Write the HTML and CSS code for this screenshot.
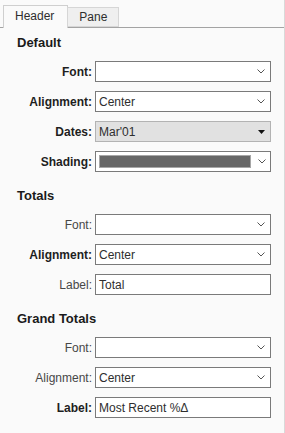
FILE: index.html
```html
<!DOCTYPE html>
<html lang="en">
<head>
    <meta charset="UTF-8">
    <title>Format Header</title>
    <link rel="stylesheet" href="styles.css">
</head>
<body>
    <div class="panel">
        <div class="tab-bar">
            <div class="tab active">Header</div>
            <div class="tab">Pane</div>
        </div>

        <div class="section">
            <h2 class="section-title">Default</h2>
            <div class="row">
                <label class="row-label bold">Font:</label>
                <div class="select"><span class="select-text"></span><svg class="chevron" width="8" height="5" viewBox="0 0 8 5"><path d="M0.5 0.5 L4 4 L7.5 0.5" fill="none" stroke="#555" stroke-width="1"/></svg></div>
            </div>
            <div class="row">
                <label class="row-label bold">Alignment:</label>
                <div class="select"><span class="select-text">Center</span><svg class="chevron" width="8" height="5" viewBox="0 0 8 5"><path d="M0.5 0.5 L4 4 L7.5 0.5" fill="none" stroke="#555" stroke-width="1"/></svg></div>
            </div>
            <div class="row">
                <label class="row-label bold">Dates:</label>
                <div class="select disabled"><span class="select-text">Mar'01</span><svg class="caret" width="7" height="4" viewBox="0 0 7 4"><path d="M0 0 H7 L3.5 4 Z" fill="#111"/></svg></div>
            </div>
            <div class="row">
                <label class="row-label bold">Shading:</label>
                <div class="select shading"><span class="swatch"></span><svg class="chevron" width="8" height="5" viewBox="0 0 8 5"><path d="M0.5 0.5 L4 4 L7.5 0.5" fill="none" stroke="#555" stroke-width="1"/></svg></div>
            </div>
        </div>

        <div class="section">
            <h2 class="section-title">Totals</h2>
            <div class="row">
                <label class="row-label">Font:</label>
                <div class="select"><span class="select-text"></span><svg class="chevron" width="8" height="5" viewBox="0 0 8 5"><path d="M0.5 0.5 L4 4 L7.5 0.5" fill="none" stroke="#555" stroke-width="1"/></svg></div>
            </div>
            <div class="row">
                <label class="row-label bold">Alignment:</label>
                <div class="select"><span class="select-text">Center</span><svg class="chevron" width="8" height="5" viewBox="0 0 8 5"><path d="M0.5 0.5 L4 4 L7.5 0.5" fill="none" stroke="#555" stroke-width="1"/></svg></div>
            </div>
            <div class="row">
                <label class="row-label">Label:</label>
                <div class="text-input">Total</div>
            </div>
        </div>

        <div class="section">
            <h2 class="section-title">Grand Totals</h2>
            <div class="row">
                <label class="row-label">Font:</label>
                <div class="select"><span class="select-text"></span><svg class="chevron" width="8" height="5" viewBox="0 0 8 5"><path d="M0.5 0.5 L4 4 L7.5 0.5" fill="none" stroke="#555" stroke-width="1"/></svg></div>
            </div>
            <div class="row">
                <label class="row-label">Alignment:</label>
                <div class="select"><span class="select-text">Center</span><svg class="chevron" width="8" height="5" viewBox="0 0 8 5"><path d="M0.5 0.5 L4 4 L7.5 0.5" fill="none" stroke="#555" stroke-width="1"/></svg></div>
            </div>
            <div class="row">
                <label class="row-label bold">Label:</label>
                <div class="text-input">Most Recent %Δ</div>
            </div>
        </div>
    </div>
</body>
</html>
```

FILE: styles.css
```css
* {
    box-sizing: border-box;
}

body {
    margin: 0;
    font-family: 'Liberation Sans', Arial, sans-serif;
    font-size: 12px;
    color: #333;
    background-color: #fafafa;
}

.panel {
    width: 285px;
    height: 433px;
    border-right: 1px solid #d9d9d9;
    background-color: #fafafa;
}

.tab-bar {
    display: flex;
    align-items: flex-end;
    height: 28px;
    padding-left: 3px;
    border-bottom: 1px solid #a3a3a3;
}

.tab {
    height: 20px;
    padding: 0 11px 0 11px;
    margin-left: -1px;
    border: 1px solid #d6d6d6;
    background-color: #efefef;
    line-height: 18px;
    color: #2e2e2e;
}

.tab.active {
    height: 23px;
    margin-left: 0;
    margin-bottom: -1px;
    padding: 0 13px 0 11px;
    border-color: #cfcfcf;
    border-bottom: none;
    background-color: #fafafa;
    line-height: 21px;
}

.section {
    padding-top: 7px;
    padding-bottom: 9px;
}

.section-title {
    margin: 0 0 10px 17px;
    font-size: 13px;
    line-height: 16px;
    font-weight: 700;
    color: #1a1a1a;
}

.row {
    display: grid;
    grid-template-columns: 92px 176px;
    column-gap: 3px;
    align-items: center;
    margin-bottom: 9px;
}

.row:last-child {
    margin-bottom: 0;
}

.row-label {
    text-align: right;
    color: #474747;
}

.row-label.bold {
    font-weight: 700;
    color: #1e1e1e;
}

.select, .text-input {
    display: flex;
    align-items: center;
    height: 21px;
    padding: 0 5px 0 3px;
    border: 1px solid #7a7a7a;
    background-color: #fff;
    color: #2e2e2e;
}

.select-text {
    flex: 1;
}

.chevron, .caret {
    flex: none;
}

.select.disabled {
    background-color: #e1e1e1;
    border-color: #b3b3b3;
}

.select.shading {
    padding-top: 3px;
    padding-bottom: 3px;
}

.swatch {
    flex: none;
    width: 152px;
    height: 13px;
    margin-right: 7px;
    background-color: #666;
    border: 1px solid #a6a6a6;
}
```
